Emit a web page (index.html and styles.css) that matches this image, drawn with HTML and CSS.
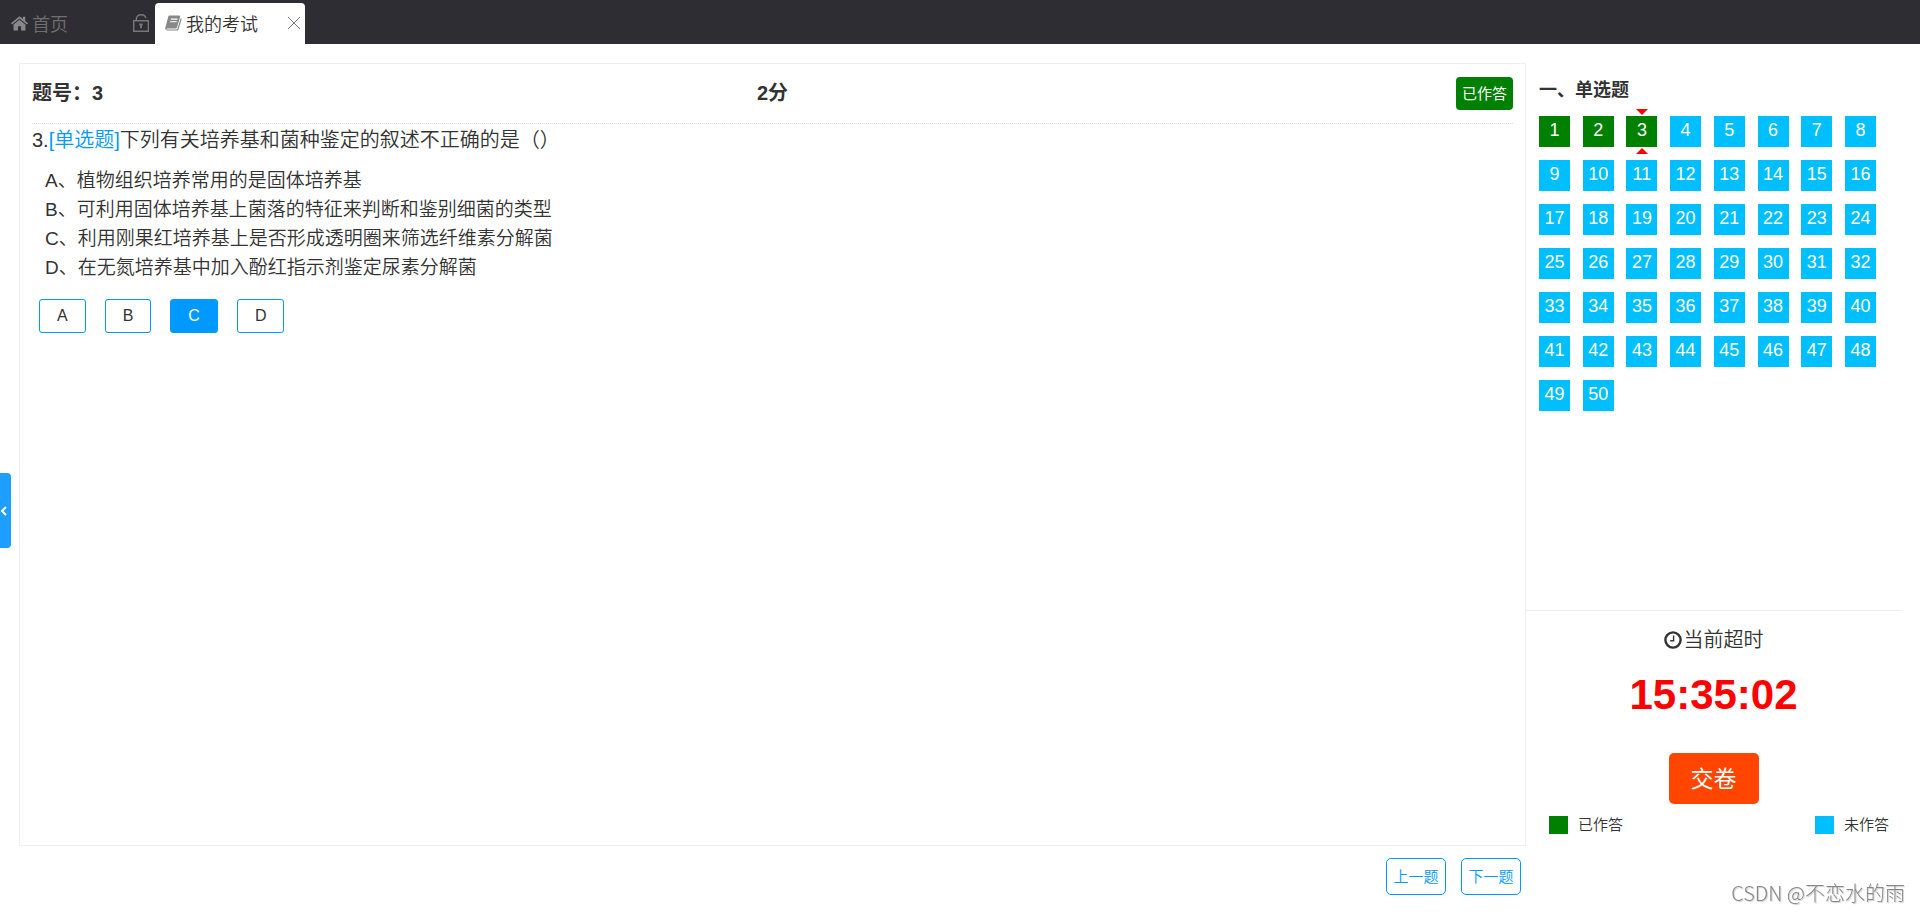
FILE: index.html
```html
<!DOCTYPE html>
<html lang="zh-CN">
<head>
    <meta charset="UTF-8">
    <meta name="viewport" content="width=device-width, initial-scale=1.0">
    <title>我的考试</title>
    <link rel="stylesheet" href="styles.css">
</head>
<body>
    <nav class="tabs">
        <a class="tab tab-home" href="#">
            <svg class="tab-icon" viewBox="0 0 16 14"><path d="M8 0.6 0 7.3l1 1.2L8 2.7l7 5.8 1-1.2-2.6-2.2V1.2h-2.2v2zM8 3.9 2.4 8.5V14h4.2v-4h2.8v4h4.2V8.5z"/></svg>
            <span>首页</span>
            <svg class="lock-icon" viewBox="0 0 16 18"><path d="M.7 6.7h14.6v10.6H.7zM3.3 6.5V5.2C3.3 2.6 5.2.8 8 .8c2.5 0 4.4 1.3 4.9 3.2"/><path d="M6.3 10.5h3.4M8 10v4.2" stroke-width="1.8"/></svg>
        </a>
        <a class="tab tab-active" href="#">
            <svg class="tab-icon" viewBox="0 0 17 16"><path fill-rule="evenodd" d="M4.6.6h9.6q1.3 0 .9 1.4l-3 10.2q-.4 1.2-1.7 1.2H2.3q-1 0-.8 1h9.7q1 0 1.3-.9L15.7 3.3q1.2.3.8 1.5l-3 9.6q-.4 1.2-1.8 1.2H2Q-.2 15.2.3 12.7L3.2 1.8Q3.5.6 4.6.6zM6 3.6l-.3 1.1h6.6l.3-1.1zM5.3 6.2 5 7.3h6.6l.3-1.1z"/></svg>
            <span>我的考试</span>
            <svg class="close-icon" viewBox="0 0 14 14"><path d="M1 1l12 12M13 1 1 13"/></svg>
        </a>
    </nav>

    <button class="side-toggle" aria-label="展开菜单">
        <svg viewBox="0 0 6 10"><path d="M5 1 1 5l4 4"/></svg>
    </button>

    <main class="exam">
        <section class="question">
            <header class="question-header">
                <b>题号：3</b>
                <b>2分</b>
                <span class="badge">已作答</span>
            </header>
            <p class="question-title">3.<span class="question-type">[单选题]</span>下列有关培养基和菌种鉴定的叙述不正确的是（）</p>
            <ul class="options">
                <li>A、植物组织培养常用的是固体培养基</li>
                <li>B、可利用固体培养基上菌落的特征来判断和鉴别细菌的类型</li>
                <li>C、利用刚果红培养基上是否形成透明圈来筛选纤维素分解菌</li>
                <li>D、在无氮培养基中加入酚红指示剂鉴定尿素分解菌</li>
            </ul>
            <div class="answers">
                <button class="answer">A</button>
                <button class="answer">B</button>
                <button class="answer selected">C</button>
                <button class="answer">D</button>
            </div>
        </section>

        <aside class="sidebar">
            <div class="card">
                <h3>一、单选题</h3>
                <div class="numbers" id="numbers"></div>
            </div>
            <div class="status">
                <div class="status-label">
                    <svg class="clock-icon" viewBox="0 0 18 18"><circle cx="9" cy="9" r="7.6"/><path d="M9.6 4.5v5.2H6.2" stroke-width="1.4"/></svg>
                    <span>当前超时</span>
                </div>
                <div class="timer">15:35:02</div>
                <button class="submit">交卷</button>
                <div class="legend">
                    <span class="legend-item"><i class="dot dot-done"></i>已作答</span>
                    <span class="legend-item"><i class="dot"></i>未作答</span>
                </div>
            </div>
        </aside>

        <div class="pager">
            <button class="page-btn">上一题</button>
            <button class="page-btn">下一题</button>
        </div>
    </main>

    <div class="watermark">CSDN @不恋水的雨</div>

    <script>
        const total = 50;
        const current = 3;
        const answered = [1, 2, 3];
        const numbers = document.getElementById('numbers');

        for (let i = 1; i <= total; i++) {
            const btn = document.createElement('button');
            btn.className = 'number';
            btn.textContent = i;
            if (answered.includes(i)) {
                btn.classList.add('done');
            }
            if (i === current) {
                btn.classList.add('current');
            }
            numbers.appendChild(btn);
        }
    </script>
</body>
</html>
```

FILE: styles.css
```css
* {
    box-sizing: border-box;
}

body {
    margin: 0;
    min-height: 100vh;
    display: flex;
    flex-direction: column;
    background-color: #fff;
    color: #333;
    font-family: "Liberation Sans", "Noto Sans CJK SC", sans-serif;
    font-weight: 350;
    font-size: 15px;
}

b,
h3 {
    font-weight: bold;
}

button {
    font: inherit;
    cursor: pointer;
}

/* top tabs */
.tabs {
    display: flex;
    align-items: flex-end;
    height: 44px;
    background-color: #2f2d34;
}

.tab {
    display: flex;
    align-items: center;
    height: 41px;
    padding-bottom: 2px;
    font-size: 18px;
    text-decoration: none;
    border-radius: 4px 4px 0 0;
}

.tab-home {
    width: 155px;
    padding-left: 11px;
    padding-right: 6px;
    color: #6f6f6f;
}

.tab-active {
    width: 150px;
    padding-left: 10px;
    padding-right: 4px;
    background-color: #fff;
    color: #333;
}

.tab-icon {
    width: 17px;
    height: 16px;
    margin-right: 4px;
    fill: #888;
}

.lock-icon {
    width: 16px;
    height: 18px;
    margin-left: auto;
    fill: none;
    stroke: #777;
    stroke-width: 1.4;
}

.close-icon {
    width: 14px;
    height: 14px;
    margin-left: auto;
    fill: none;
    stroke: #777;
}

/* side menu handle */
.side-toggle {
    position: fixed;
    left: 0;
    top: 473px;
    width: 11px;
    height: 75px;
    padding: 0 4px 0 1px;
    border: none;
    border-radius: 0 4px 4px 0;
    background-color: #1e9fff;
}

.side-toggle svg {
    display: block;
    width: 6px;
    height: 10px;
    fill: none;
    stroke: #fff;
    stroke-width: 2;
}

/* main layout */
.exam {
    flex: 1;
    display: grid;
    grid-template-columns: 1fr 375px;
    grid-template-rows: 1fr auto;
    padding: 19px 19px 17px;
}

.question {
    padding: 13px 12px;
    border: 1px solid #eee;
}

.question-header {
    display: grid;
    grid-template-columns: 1fr auto 1fr;
    height: 47px;
    border-bottom: 1px dotted #ddd;
    font-size: 20px;
    line-height: 32px;
}

.badge {
    align-self: start;
    justify-self: end;
    padding: 0 6px;
    border-radius: 4px;
    background-color: green;
    color: #fff;
    font-size: 15px;
    font-weight: 400;
    line-height: 33px;
}

.question-title {
    margin: 0;
    font-size: 20px;
    line-height: 32px;
}

.question-type {
    color: #0099ff;
}

.options {
    margin: 10px 0 0;
    padding: 0 13px;
    list-style: none;
    font-size: 19px;
    line-height: 29px;
}

.answers {
    display: flex;
    gap: 19px;
    padding: 17px 7px;
}

.answer {
    height: 34px;
    padding: 0 17px;
    border: 1px solid #0099ff;
    border-radius: 3px;
    background-color: #fff;
    color: #333;
    font-size: 16px;
}

.answer.selected {
    background-color: #0099ff;
    color: #fff;
}

/* answer card */
.sidebar {
    display: flex;
    flex-direction: column;
}

.card {
    flex: 1;
    padding: 12px 25px 12px 13px;
}

.card h3 {
    margin: 0 0 11px;
    font-size: 18px;
    line-height: 30px;
}

.numbers {
    display: grid;
    grid-template-columns: repeat(8, 31px);
    justify-content: space-between;
    row-gap: 13px;
}

.number {
    position: relative;
    height: 31px;
    padding: 0 0 2px;
    border: none;
    background-color: deepskyblue;
    color: #fff;
    font-size: 18px;
}

.number.done {
    background-color: green;
}

.number.current::before,
.number.current::after {
    content: "";
    position: absolute;
    left: 10px;
    border: 6px solid transparent;
}

.number.current::before {
    bottom: 100%;
    border-top-color: red;
    border-bottom: none;
    margin-bottom: 1px;
}

.number.current::after {
    top: 100%;
    border-bottom-color: red;
    border-top: none;
    margin-top: 1px;
}

/* timer and submit */
.status {
    display: flex;
    flex-direction: column;
    align-items: center;
    height: 236px;
    padding-top: 14px;
    border-top: 1px solid #eee;
}

.status-label {
    display: flex;
    align-items: center;
    gap: 2px;
    font-size: 20px;
    line-height: 30px;
}

.clock-icon {
    width: 18px;
    height: 18px;
    fill: none;
    stroke: #333;
    stroke-width: 2.4;
}

.timer {
    margin: 15px 0 33px;
    color: red;
    font-size: 42px;
    font-weight: bold;
    line-height: 50px;
}

.submit {
    width: 90px;
    height: 51px;
    padding: 0 0 4px;
    border: none;
    border-radius: 5px;
    background-color: orangered;
    color: #fff;
    font-size: 23px;
    font-weight: 400;
}

.legend {
    display: flex;
    justify-content: space-between;
    align-self: stretch;
    padding: 11px 12px 0 23px;
}

.legend-item {
    display: flex;
    align-items: center;
    gap: 10px;
    line-height: 20px;
}

.dot {
    width: 19px;
    height: 18px;
    background-color: deepskyblue;
}

.dot-done {
    background-color: green;
}

/* previous / next */
.pager {
    display: flex;
    justify-content: flex-end;
    gap: 15px;
    padding: 12px 5px 0 0;
}

.page-btn {
    width: 60px;
    height: 37px;
    padding: 0 0 2px;
    border: 1px solid #0099ff;
    border-radius: 5px;
    background-color: #fff;
    color: #0099ff;
}

.watermark {
    position: fixed;
    right: 15px;
    bottom: 4px;
    color: #888;
    font-family: "Noto Sans CJK SC", sans-serif;
    font-size: 20px;
    font-weight: 300;
    line-height: 30px;
    text-shadow: 1px 1px 1px #ccc;
}
```
